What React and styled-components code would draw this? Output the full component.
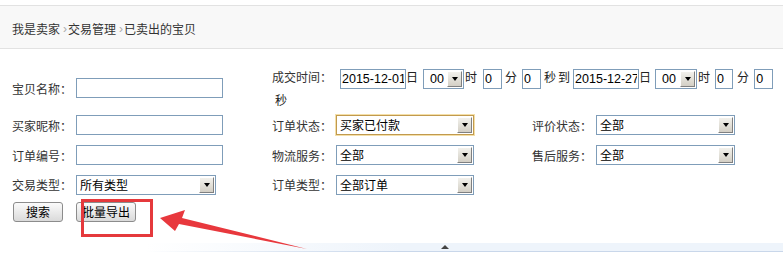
import React from "react";
import styled, { createGlobalStyle, css } from "styled-components";

const GlobalStyle = createGlobalStyle`
  body {
    margin: 0;
    background: #fff;
    font: 12px "Noto Sans CJK SC", sans-serif;
    color: #222;
  }
`;

const Page = styled.div`
  position: relative;
  width: 783px;
  height: 269px;
  overflow: hidden;
`;

// Breadcrumb bar
const Crumbs = styled.div`
  margin-top: 5px;
  height: 39px;
  padding: 3px 0 0 12px;
  border-top: 1px solid #e2e2e2;
  border-bottom: 1px solid #e2e2e2;
  background: #f8f8f8;
  display: flex;
  align-items: center;
  color: #333;
`;

const Sep = styled.span`
  font-family: "Liberation Sans", sans-serif;
  color: #aaa;
  margin: 0 1px 0 3px;
`;

// Search form
const Form = styled.div`
  display: grid;
  grid-template-columns: 260px 260px 1fr;
  grid-template-rows: 44px 30px 30px 29px 26px;
  padding: 17px 0 0 12px;
`;

const Field = styled.div`
  display: flex;
  align-items: center;
`;

const Label = styled.span`
  width: 64px;
  flex-shrink: 0;
  color: #333;
`;

const TextInput = styled.input`
  box-sizing: border-box;
  width: ${(p) => p.$w || 147}px;
  height: 20px;
  margin: 0;
  padding: 0 1px;
  border: 1px solid #7f9db9;
  font: 12.5px "Liberation Sans", sans-serif;
  color: #000;
  vertical-align: middle;
  margin-left: ${(p) => p.$ml || 0}px;
  outline: none;
`;

const TimeCell = styled.div`
  grid-column: 2 / span 2;
  width: 506px;
  line-height: 22px;
`;

const TimeLabel = styled.span`
  display: inline-block;
  width: 68px;
  color: #333;
`;

const Word = styled.span`
  margin-left: ${(p) => p.$ml || 0}px;
`;

const SelectBox = styled.div`
  display: inline-flex;
  align-items: center;
  box-sizing: border-box;
  width: ${(p) => p.$w}px;
  height: 20px;
  margin-left: ${(p) => p.$ml || 0}px;
  padding-left: ${(p) => (p.$mono ? 6 : 3)}px;
  border: 1px solid #7f9db9;
  background: #fff;
  vertical-align: middle;
  line-height: 18px;
  color: #000;
  font-family: ${(p) =>
    p.$mono ? '"Liberation Sans", sans-serif' : '"Noto Sans CJK SC", sans-serif'};
  font-size: ${(p) => (p.$mono ? 12.5 : 12)}px;
  ${(p) =>
    p.$focus &&
    css`
      border-color: #c19a4e;
      box-shadow: 0 0 0 1px #f4dfa8;
    `}
`;

const DropButton = styled.span`
  margin-left: auto;
  margin-right: 1px;
  box-sizing: border-box;
  width: 15px;
  height: 16px;
  border: 1px solid;
  border-color: #fff #808080 #808080 #fff;
  background: linear-gradient(#f2f1ec, #d3cfc5);
  display: flex;
  align-items: center;
  justify-content: center;

  &::after {
    content: "";
    border-left: 3px solid transparent;
    border-right: 3px solid transparent;
    border-top: 4px solid #000;
  }
`;

const ButtonRow = styled.div`
  grid-column: 1 / -1;
  display: flex;
  align-items: center;
  gap: 13px;
  padding-left: 1px;
`;

const Button = styled.button`
  box-sizing: border-box;
  width: ${(p) => p.$w}px;
  height: 20px;
  padding: 0;
  border: 1px solid #8c8c8c;
  border-radius: 3px;
  background: linear-gradient(#fbfbfb, #dadada);
  font: 12px "Noto Sans CJK SC", sans-serif;
  color: #000;
  line-height: 18px;
`;

// Bottom strip with the little caret
const Strip = styled.div`
  margin: 18px 0 0 145px;
  height: 9px;
  display: flex;
  align-items: flex-end;
  padding-left: 296px;
  background:
    linear-gradient(to right, rgba(200, 214, 234, 0), #c9d7ea 40%) bottom / 100% 1px no-repeat,
    linear-gradient(to right, rgba(236, 243, 251, 0), #eef4fb 40%);
`;

const Caret = styled.span`
  margin-bottom: 3px;
  border-left: 4px solid transparent;
  border-right: 4px solid transparent;
  border-bottom: 4px solid #444;
`;

// Red annotation drawn over the form
const Mark = styled.div`
  position: absolute;
  left: 81px;
  top: 199px;
  width: 72px;
  height: 38px;
  box-sizing: border-box;
  border: 3px solid #e5393c;
  pointer-events: none;
`;

const ArrowLayer = styled.svg`
  position: absolute;
  left: 0;
  top: 0;
  pointer-events: none;
`;

function Select({ w, value, focus, mono, ml }) {
  return (
    <SelectBox $w={w} $focus={focus} $mono={mono} $ml={ml}>
      <span>{value}</span>
      <DropButton />
    </SelectBox>
  );
}

export default function App() {
  return (
    <Page>
      <GlobalStyle />
      <Crumbs>
        我是卖家<Sep>›</Sep>交易管理<Sep>›</Sep>已卖出的宝贝
      </Crumbs>

      <Form>
        <Field>
          <Label>宝贝名称：</Label>
          <TextInput />
        </Field>
        <TimeCell>
          <TimeLabel>成交时间：</TimeLabel>
          <TextInput $w={66} defaultValue="2015-12-01" />
          <Word>日</Word>
          <Select w={41} value="00" mono ml={5} />
          <Word $ml={1}>时</Word>
          <TextInput $w={19} $ml={6} defaultValue="0" />
          <Word $ml={3}>分</Word>
          <TextInput $w={19} $ml={5} defaultValue="0" />
          <Word $ml={3}>秒</Word>
          <Word $ml={2}>到</Word>
          <TextInput $w={66} $ml={3} defaultValue="2015-12-27" />
          <Word>日</Word>
          <Select w={42} value="00" mono ml={4} />
          <Word $ml={1}>时</Word>
          <TextInput $w={18} $ml={5} defaultValue="0" />
          <Word $ml={4}>分</Word>
          <TextInput $w={19} $ml={5} defaultValue="0" />
          <Word $ml={3}>秒</Word>
        </TimeCell>

        <Field>
          <Label>买家昵称：</Label>
          <TextInput />
        </Field>
        <Field>
          <Label>订单状态：</Label>
          <Select w={138} value="买家已付款" focus />
        </Field>
        <Field>
          <Label>评价状态：</Label>
          <Select w={139} value="全部" />
        </Field>

        <Field>
          <Label>订单编号：</Label>
          <TextInput />
        </Field>
        <Field>
          <Label>物流服务：</Label>
          <Select w={138} value="全部" />
        </Field>
        <Field>
          <Label>售后服务：</Label>
          <Select w={139} value="全部" />
        </Field>

        <Field>
          <Label>交易类型：</Label>
          <Select w={140} value="所有类型" />
        </Field>
        <Field>
          <Label>订单类型：</Label>
          <Select w={138} value="全部订单" />
        </Field>
        <div />

        <ButtonRow>
          <Button $w={50}>搜索</Button>
          <Button $w={60}>批量导出</Button>
        </ButtonRow>
      </Form>

      <Strip>
        <Caret />
      </Strip>

      <Mark />
      <ArrowLayer width="783" height="269" viewBox="0 0 783 269">
        <polygon
          points="160,218 185,210 182,218 307,249 179,224 175,231"
          fill="#e8383d"
        />
      </ArrowLayer>
    </Page>
  );
}
